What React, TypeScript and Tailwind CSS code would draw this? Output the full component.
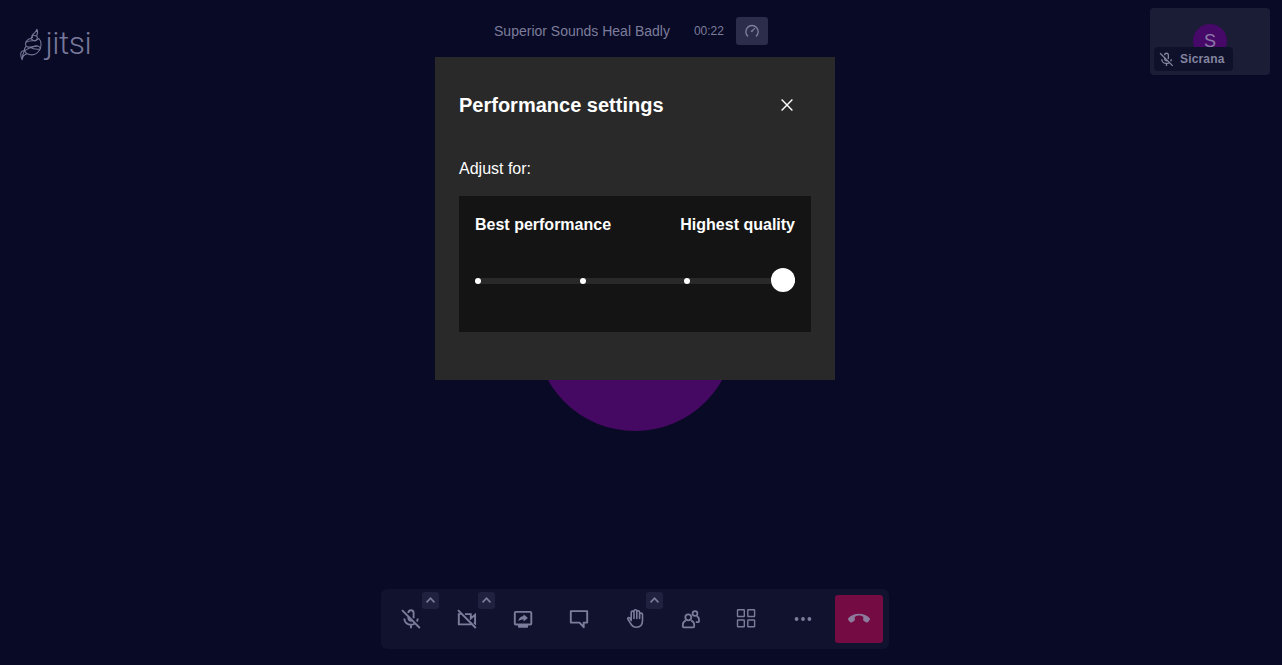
import type { ReactNode } from 'react';

function Icon({ children, size = 24 }: { children: ReactNode; size?: number }) {
  return (
    <svg width={size} height={size} viewBox="0 0 24 24" fill="none" stroke="currentColor" strokeWidth={1.9} className="block shrink-0">
      {children}
    </svg>
  );
}

const MicOff = () => (
  <>
    <path d="M9.4 6V5.8a2.6 2.6 0 0 1 5.2 0v5.4M9.4 9.2v2a2.5 2.5 0 0 0 3.8 2.1" />
    <path d="M5.3 11.5c0 3.6 2.9 6.2 6.7 6.2 1.3 0 2.5-.4 3.5-1M18.7 11.5c0 1.1-.3 2.1-.8 3M12 17.7V21.3" />
    <path d="M3 3.2 20.8 21" />
  </>
);

const CameraOff = () => (
  <>
    <path d="M5.8 7.1H3.8v10.3h12v-2M10 7.1h5.8v4.3l4.3-3.6v8.6l-1.2-1" />
    <path d="M3 3.2 20.8 21" />
  </>
);

const ShareScreen = () => (
  <>
    <rect x="3.8" y="4.9" width="16.5" height="12.6" rx="1" />
    <path d="M7 18h10v2a.7.7 0 0 1-.7.7H7.7A.7.7 0 0 1 7 20z" fill="currentColor" stroke="none" />
    <path d="M7.3 14.3c.6-3.3 2.4-5 5.3-5.3V7.2l4.3 3.7-4.3 3.7v-2c-2.2 0-4 .5-5.3 1.7z" fill="currentColor" stroke="none" />
  </>
);

const Chat = () => <path d="M3.8 4.1h16.4v11.5h-3.5v4.6l-4.2-4.6H3.8z" strokeLinejoin="round" />;

const Hand = () => (
  <path
    d="M8.2 13.6V5.5a1.4 1.4 0 0 1 2.8 0v6M11 11.5V4.1a1.4 1.4 0 0 1 2.8 0v7.4M13.8 5.2a1.4 1.4 0 0 1 2.8 0v6.3M16.6 7.6a1.4 1.4 0 0 1 2.9 0v6c0 4.1-2.4 6.7-6.1 6.7-3.1 0-4.7-1.4-6-4.1L4.8 12c-.4-1.2 1-2 1.8-1l1.6 2.3"
    strokeWidth="1.6"
    strokeLinejoin="round"
    strokeLinecap="round"
  />
);

const People = () => (
  <g strokeWidth="1.75">
    <circle cx="9.3" cy="10.3" r="3" />
    <path d="M6.8 13.6c-1.8.6-3 2.3-3 4.3v1.6c0 .5.4.9.9.9h9.6c.5 0 .9-.4.9-.9v-1.6c0-2-1.2-3.7-3-4.3" />
    <circle cx="16" cy="6.5" r="2.4" />
    <path d="M17.7 9.3c1.4.5 2.3 1.7 2.3 3.3v1.6c0 .6-.4 1-1 1h-2.2" />
  </g>
);

const Tiles = () => (
  <g strokeWidth="1.4">
    <rect x="2.5" y="2.7" width="6.8" height="6.8" rx=".5" />
    <rect x="12.8" y="2.7" width="6.8" height="6.8" rx=".5" />
    <rect x="2.5" y="13" width="6.8" height="6.8" rx=".5" />
    <rect x="12.8" y="13" width="6.8" height="6.8" rx=".5" />
  </g>
);

const More = () => (
  <g fill="currentColor" stroke="none">
    <circle cx="5.6" cy="12" r="1.9" />
    <circle cx="12" cy="12" r="1.9" />
    <circle cx="18.4" cy="12" r="1.9" />
  </g>
);

const HangUp = () => (
  <path
    d="M12 6.8c4.6 0 8.3 1.6 10.5 4.2.6.7.6 1.6 0 2.3l-1.5 1.6c-.5.6-1.3.7-2 .3l-2.1-1.3c-.6-.4-.9-1-.8-1.7l.3-2.2c-1.4-.9-2.9-1.4-4.4-1.4s-3 .5-4.4 1.4l.3 2.2c.1.7-.2 1.3-.8 1.7L5 15.2c-.7.4-1.5.3-2-.3l-1.5-1.6c-.6-.7-.6-1.6 0-2.3C3.7 8.4 7.4 6.8 12 6.8z"
    fill="currentColor"
    stroke="none"
  />
);

const tools: { name: string; icon: ReactNode; menu?: boolean }[] = [
  { name: 'Unmute', icon: <MicOff />, menu: true },
  { name: 'Start camera', icon: <CameraOff />, menu: true },
  { name: 'Share screen', icon: <ShareScreen /> },
  { name: 'Chat', icon: <Chat /> },
  { name: 'Raise hand', icon: <Hand />, menu: true },
  { name: 'Participants', icon: <People /> },
  { name: 'Tile view', icon: <Tiles /> },
  { name: 'More actions', icon: <More /> },
];

function Logo() {
  return (
    <div className="absolute left-5 top-7 flex text-[#77789a]">
      <svg width="23" height="34" viewBox="0 0 23 34" fill="none" stroke="currentColor" strokeWidth="1.05" strokeLinejoin="round" className="block">
        <path d="M16.8 1c.3 2-1.5 3.2-3 4.5-1.7 1.3-1.8 3-1.3 4.6M16.8 1c1.4 2.5 1 4.4-.2 6.7M12.3 7l4.8 1.2c.5 2-.1 3.8-1.7 4.6-1.8.2-3.3-.8-4.3-2.2l1.2-3.6" />
        <path d="M11.1 10.6C8 10.8 5.4 13.5 5.5 16c.1 2 1.9 3.2 4.1 3.1 3-.2 5.2-1.7 7.8-1.2 1.7.3 3 1.3 3.2 3M15.4 12.8l3.5-2.3c2.6 2.8 2.8 7.7.8 11.2-2.3 4-6.4 5.8-10.5 4.9-2.3-.5-3.9-1.9-4.7-3.8" />
        <path d="M6 14.2c3-2 6.5-1.5 9.4-1.4M6.4 18.1C4.6 19.5 4.1 21 4.5 22.8c3.4-2.5 8-4.2 12.9-4.9M4.5 22.8C2 22.5.6 24.2.7 26.5c.1 1.8.7 3.8 1.5 5.2.4-2.8 1.5-5.2 4.8-5.9M2.2 31.7c-.2-3.1.5-5.8 2.3-8.9M9.6 19.1c3.7 2.2 7.5 2.5 11 1.8" />
      </svg>
      <span className="ml-[2.5px] -mt-[2px] font-[Roboto,sans-serif] text-[32px] leading-[34px] font-light tracking-[-0.5px]">jitsi</span>
    </div>
  );
}

function Thumbnail() {
  return (
    <div className="absolute top-2 left-[1150px] flex h-[67px] w-[120px] justify-center rounded bg-[#1b1c36] pt-4">
      <div className="flex size-[34px] items-center justify-center rounded-full bg-[#460967] text-lg text-[#8c79a8]">S</div>
      <div className="absolute bottom-1 left-1 flex h-6 w-[79px] items-center gap-[5px] rounded bg-[#0f102a] pl-1 text-xs font-bold tracking-[0.16px] text-[#83849f]">
        <Icon size={17}><MicOff /></Icon>
        Sicrana
      </div>
    </div>
  );
}

function Toolbar() {
  return (
    <div className="flex h-[60px] items-center gap-2 rounded-md bg-[#11122d] px-1.5">
      {tools.map((tool) => (
        <div key={tool.name} className="relative flex size-12 items-center justify-center">
          <Icon>{tool.icon}</Icon>
          {tool.menu && (
            <div className="absolute -top-[3px] left-[35px] flex size-[17px] justify-center rounded-[3px] bg-[#20213f] pt-[5px]">
              <svg width="9" height="6" viewBox="0 0 9 6" fill="none" stroke="currentColor" strokeWidth="1.6"><path d="m.6 5.4 3.9-4.2 3.9 4.2" /></svg>
            </div>
          )}
        </div>
      ))}
      <div className="flex size-12 items-center justify-center rounded-[3px] bg-[#740b42] text-[#8c7b9c]">
        <Icon><HangUp /></Icon>
      </div>
    </div>
  );
}

function SettingsDialog() {
  return (
    <div className="h-[323px] w-[400px] bg-[#292929] px-6 pt-8 text-white">
      <div className="flex h-8 items-center justify-between pr-[18px]">
        <h1 className="text-xl font-bold">Performance settings</h1>
        <svg width="12" height="12" viewBox="0 0 12 12" stroke="currentColor" strokeWidth="1.4"><path d="m.6.6 10.8 10.8M11.4.6.6 11.4" /></svg>
      </div>
      <p className="mt-9 text-base leading-6">Adjust for:</p>
      <div className="mt-[15px] h-[136px] bg-[#141414] px-4 pt-[17px]">
        <div className="flex justify-between text-base leading-6 font-bold">
          <span>Best performance</span>
          <span>Highest quality</span>
        </div>
        <div className="relative mt-[41px] flex h-1.5 justify-between rounded-full bg-[#292929]">
          {[0, 1, 2, 3].map((step) => (
            <span key={step} className="size-1.5 rounded-full bg-white" />
          ))}
          <span className="absolute -top-2.5 right-0 size-6 rounded-full bg-white" />
        </div>
      </div>
    </div>
  );
}

export default function App() {
  return (
    <div className="relative h-[665px] w-full overflow-hidden bg-[#090a25] font-['Liberation_Sans',Arial,sans-serif] text-[#7c7d9c]">
      <Logo />
      <Thumbnail />
      <div className="flex h-full w-[1270px] flex-col items-center justify-between pb-4">
        <div className="mr-2 flex h-[62px] items-center">
          <span className="text-sm">Superior Sounds Heal Badly</span>
          <span className="ml-6 text-xs">00:22</span>
          <div className="ml-3 flex h-7 w-8 items-center justify-center rounded-[3px] bg-[#2c2d4a]">
            <svg width="16" height="16" viewBox="0 0 16 16" fill="none" stroke="currentColor" strokeWidth="1.4">
              <path d="M4 13.4A6.2 6.2 0 1 1 12 13.4" />
              <path d="m7 8.3 4-3.2-3.2 4z" fill="currentColor" strokeWidth=".9" strokeLinejoin="round" />
            </svg>
          </div>
        </div>
        <Toolbar />
      </div>
      <div className="absolute top-[231px] left-[535px] size-[200px] rounded-full bg-[#450963]" />
      <div className="absolute top-[57px] left-[435px]">
        <SettingsDialog />
      </div>
    </div>
  );
}
